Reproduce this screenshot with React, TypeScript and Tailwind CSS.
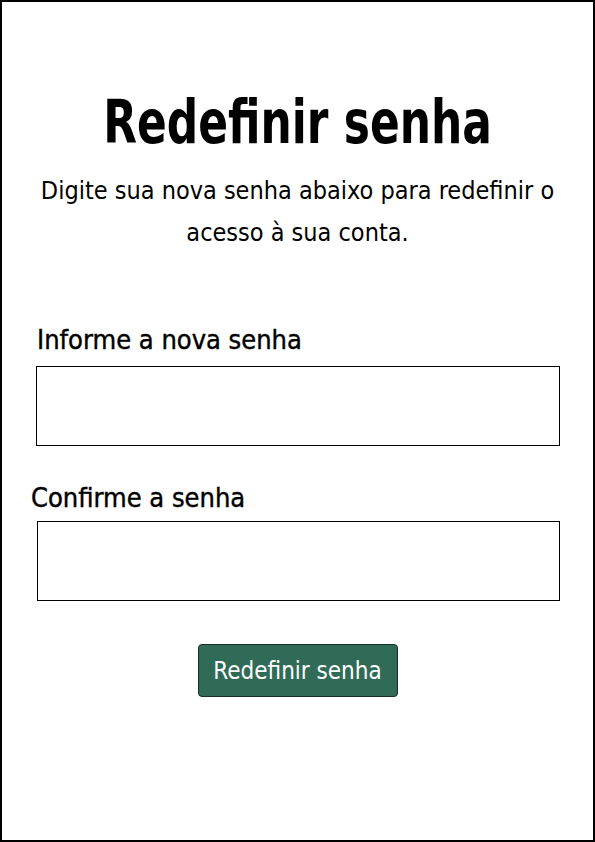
export default function App() {
  return (
    <div
      className="w-[595px] h-[842px] border-2 border-black bg-white flex flex-col"
      style={{ fontFamily: '"Liberation Sans Narrow", "DejaVu Sans Condensed", "Roboto Condensed", "Liberation Sans", sans-serif' }}
    >
      <h1 className="mt-[83px] text-center text-[61px] leading-[74px] font-bold text-black scale-x-[0.8]">Redefinir senha</h1>
      <p className="mt-[11px] px-[38px] text-center text-[25px] leading-[42px] text-black">
        Digite sua nova senha abaixo para redefinir o acesso à sua conta.
      </p>

      <label className="mt-[69px] ml-[35px] text-[27px] leading-[34px] text-black [-webkit-text-stroke:0.4px_black]">Informe a nova senha</label>
      <input type="password" className="mt-[9px] ml-[34px] w-[524px] h-[80px] border border-black bg-white outline-none" />

      <label className="mt-[35px] ml-[29px] text-[27px] leading-[34px] text-black [-webkit-text-stroke:0.4px_black]">Confirme a senha</label>
      <input type="password" className="mt-[6px] ml-[35px] w-[523px] h-[80px] border border-black bg-white outline-none" />

      <div className="mt-[43px] flex justify-center">
        <button className="w-[200px] h-[53px] rounded-[4px] border border-[#1a2e26] bg-[#2f6b56] text-white text-[24px]">
          Redefinir senha
        </button>
      </div>
    </div>
  );
}
